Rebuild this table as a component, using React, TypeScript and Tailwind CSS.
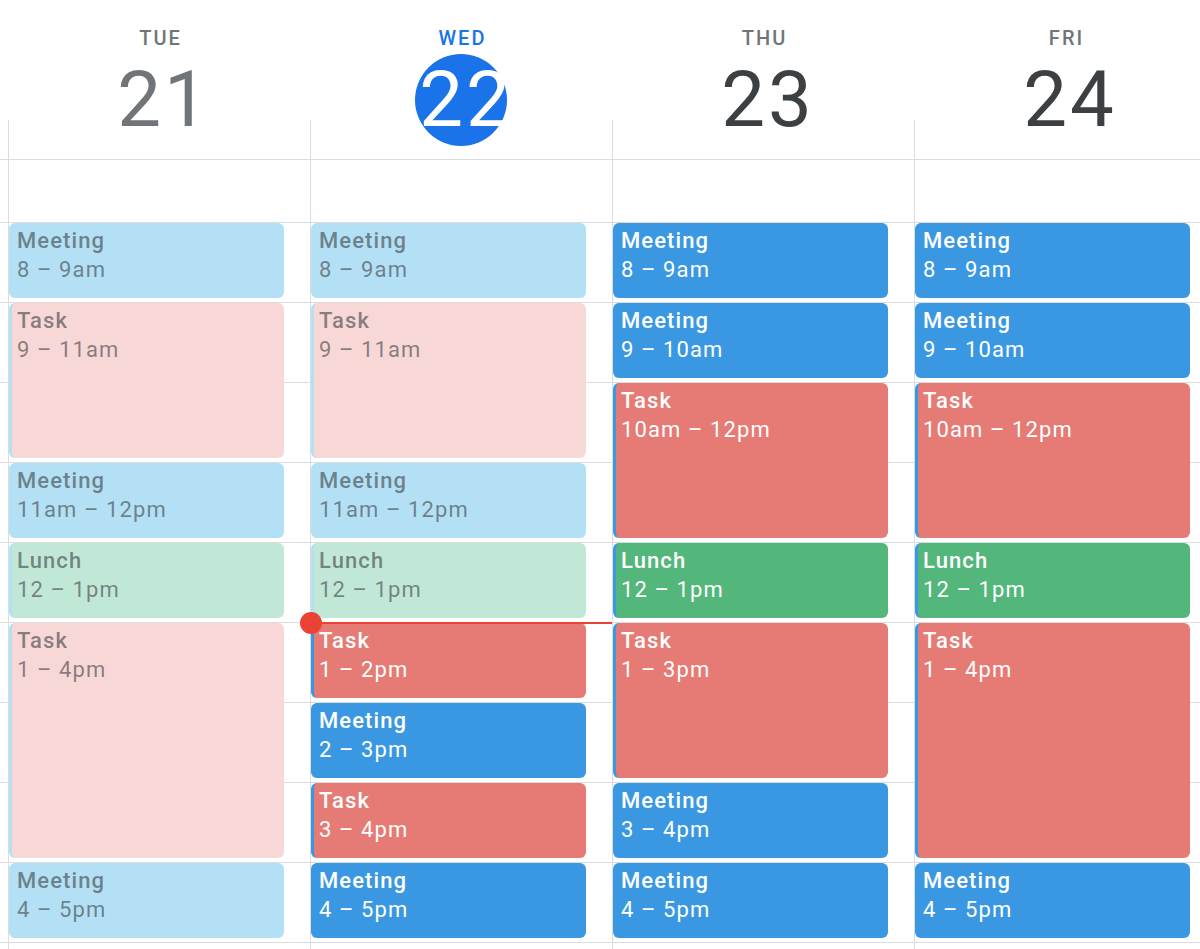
import React from "react";

type Kind = "meeting" | "task" | "lunch";
type Ev = { title: string; time: string; hours: number; kind: Kind; past: boolean };

const m = (time: string, hours: number, past = false): Ev => ({ title: "Meeting", time, hours, kind: "meeting", past });
const t = (time: string, hours: number, past = false): Ev => ({ title: "Task", time, hours, kind: "task", past });
const l = (time: string, hours: number, past = false): Ev => ({ title: "Lunch", time, hours, kind: "lunch", past });

const days: { name: string; num: string; today?: boolean; past?: boolean; events: Ev[] }[] = [
  {
    name: "TUE",
    num: "21",
    past: true,
    events: [m("8 – 9am", 1, true), t("9 – 11am", 2, true), m("11am – 12pm", 1, true), l("12 – 1pm", 1, true), t("1 – 4pm", 3, true), m("4 – 5pm", 1, true)],
  },
  {
    name: "WED",
    num: "22",
    today: true,
    events: [m("8 – 9am", 1, true), t("9 – 11am", 2, true), m("11am – 12pm", 1, true), l("12 – 1pm", 1, true), t("1 – 2pm", 1), m("2 – 3pm", 1), t("3 – 4pm", 1), m("4 – 5pm", 1)],
  },
  {
    name: "THU",
    num: "23",
    events: [m("8 – 9am", 1), m("9 – 10am", 1), t("10am – 12pm", 2), l("12 – 1pm", 1), t("1 – 3pm", 2), m("3 – 4pm", 1), m("4 – 5pm", 1)],
  },
  {
    name: "FRI",
    num: "24",
    events: [m("8 – 9am", 1), m("9 – 10am", 1), t("10am – 12pm", 2), l("12 – 1pm", 1), t("1 – 4pm", 3), m("4 – 5pm", 1)],
  },
];

function classesFor(e: Ev) {
  if (e.past) {
    const bg = e.kind === "meeting" ? "bg-[#b3e0f5]" : e.kind === "task" ? "bg-[#f7d8d6]" : "bg-[#c1e8d7]";
    return `${bg} border-[#b3e0f5] text-[#3c4043]/60`;
  }
  const bg = e.kind === "meeting" ? "bg-[#3a98e2]" : e.kind === "task" ? "bg-[#e57b74]" : "bg-[#53b67b]";
  return `${bg} border-[#3a98e2] text-white`;
}

function Event({ e }: { e: Ev }) {
  return (
    <div
      className={`mb-[5px] w-[275px] shrink-0 rounded-[6px] border-l-[3px] pl-[5px] pt-[3px] tracking-[1.1px] ${classesFor(e)}`}
      style={{ height: e.hours * 80 - 5 }}
    >
      <div className="text-[22px] font-medium leading-[29px]">{e.title}</div>
      <div className="text-[22px] leading-[29px]">{e.time}</div>
    </div>
  );
}

export default function App() {
  return (
    <div
      className="h-[949px] w-[1200px] overflow-hidden bg-white"
      style={{ fontFamily: "Roboto, 'Liberation Sans', sans-serif" }}
    >
      {/* Header */}
      <div className="flex h-[160px] border-b border-[#dadce0]">
        <div className="w-[8px] shrink-0" />
        {days.map((d) => (
          <div key={d.name} className="relative flex w-[302px] shrink-0 flex-col items-center pt-[26px]">
            <div
              className={`pl-[3px] text-[20px] font-medium leading-[24px] tracking-[2px] ${d.today ? "text-[#1a73e8]" : "text-[#70757a]"}`}
            >
              {d.name}
            </div>
            <div
              className={`mt-[4px] flex h-[92px] w-[92px] items-center justify-center rounded-full ${d.today ? "bg-[#1a73e8]" : ""}`}
            >
              <span
                className={`pl-[10px] text-[78px] leading-none tracking-[3px] ${d.today ? "text-white" : d.past ? "text-[#70757a]" : "text-[#3c4043]"}`}
              >
                {d.num}
              </span>
            </div>
            <div className="absolute bottom-0 left-0 h-[39px] w-px bg-[#dadce0]" />
          </div>
        ))}
      </div>

      {/* Body */}
      <div className="relative">
        <div className="absolute inset-0 flex flex-col">
          <div className="h-[63px] shrink-0 border-b border-[#dadce0]" />
          {Array.from({ length: 10 }).map((_, i) => (
            <div key={i} className="h-[80px] shrink-0 border-b border-[#dadce0]" />
          ))}
        </div>
        <div className="relative flex h-[789px]">
          <div className="w-[8px] shrink-0" />
          {days.map((d) => (
            <div key={d.name} className="flex w-[302px] shrink-0 flex-col border-l border-[#dadce0] pt-[63px]">
              {d.events.map((e, i) => (
                <Event key={i} e={e} />
              ))}
            </div>
          ))}
        </div>
        {/* current time indicator */}
        <div className="absolute left-[310px] top-[462px] h-[2px] w-[302px] bg-[#ea4335]" />
        <div className="absolute left-[300px] top-[452px] h-[22px] w-[22px] rounded-full bg-[#ea4335]" />
      </div>
    </div>
  );
}
